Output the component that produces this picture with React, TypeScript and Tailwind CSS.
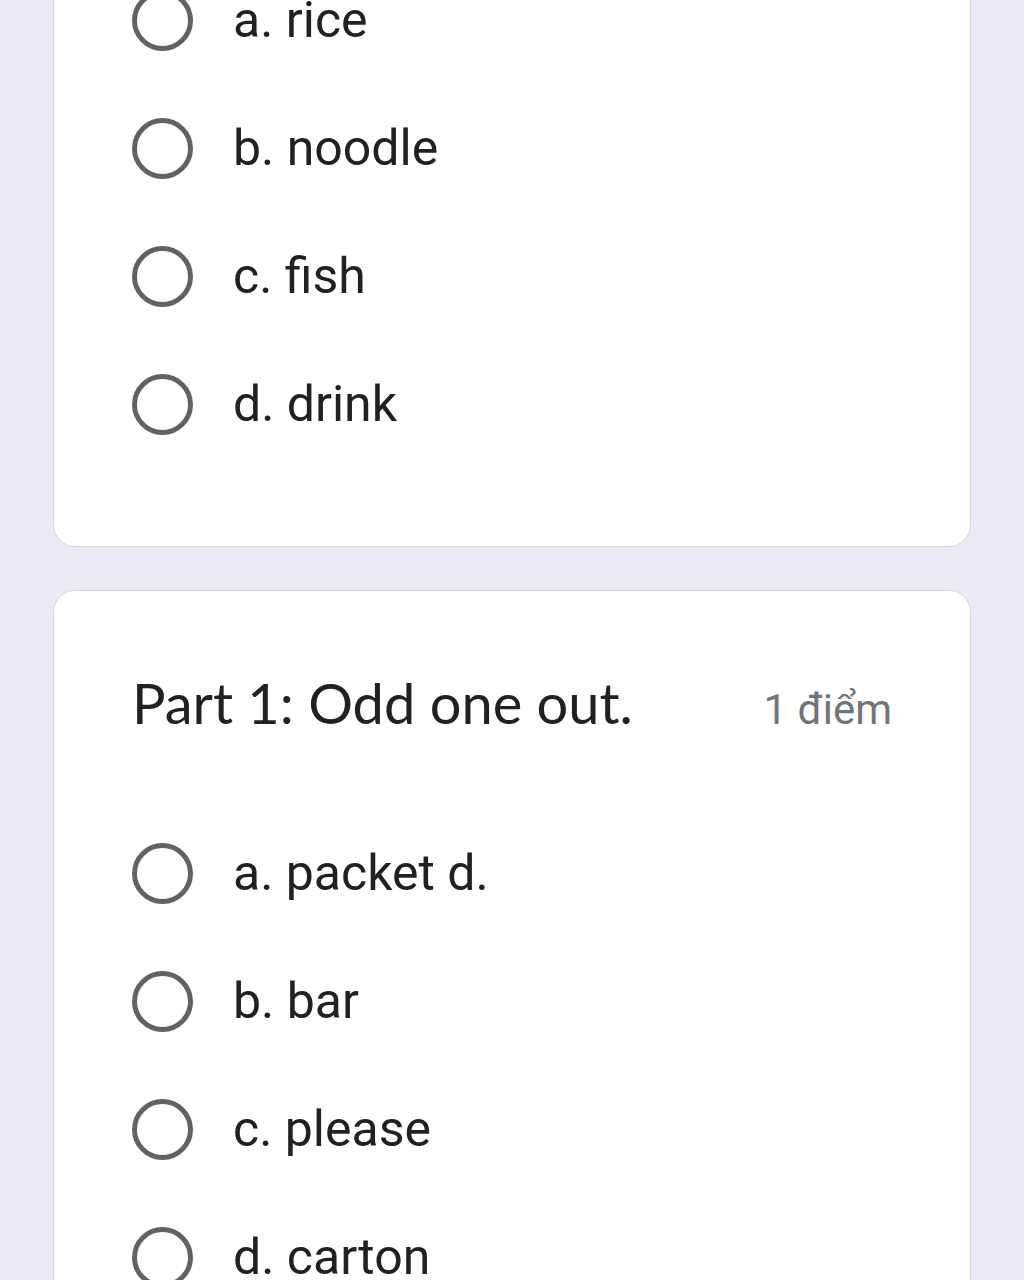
import React from "react";

const Radio = ({ label }: { label: string }) => (
  <div className="flex h-[128px] items-center">
    <div className="h-[61px] w-[61px] shrink-0 rounded-full border-[5px] border-[#5f6368]" />
    <span className="ml-[40px] text-[50px] leading-none text-[#202124]" style={{ fontFamily: "Roboto, sans-serif" }}>
      {label}
    </span>
  </div>
);

export default function App() {
  return (
    <div className="min-h-[1280px] overflow-hidden bg-[#ece9f6] px-[53px]" style={{ fontFamily: "Roboto, sans-serif" }}>
      <div className="-mt-[44px] rounded-b-[22px] border border-t-0 border-[#d6d6dc] bg-white px-[78px] pb-[78px]">
        <Radio label="a. rice" />
        <Radio label="b. noodle" />
        <Radio label="c. fish" />
        <Radio label="d. drink" />
      </div>
      <div className="mt-[43px] rounded-[22px] border border-[#d6d6dc] bg-white px-[78px] pt-[72px]">
        <div className="flex items-baseline justify-between">
          <div className="text-[56px] leading-[80px] text-[#202124]" style={{ fontFamily: "Lato, sans-serif" }}>
            Part 1: Odd one out.
          </div>
          <div className="text-[42px] text-[#70757a]">1 điểm</div>
        </div>
        <div className="mt-[66px]">
          <Radio label="a. packet d." />
          <Radio label="b. bar" />
          <Radio label="c. please" />
          <Radio label="d. carton" />
        </div>
      </div>
    </div>
  );
}
